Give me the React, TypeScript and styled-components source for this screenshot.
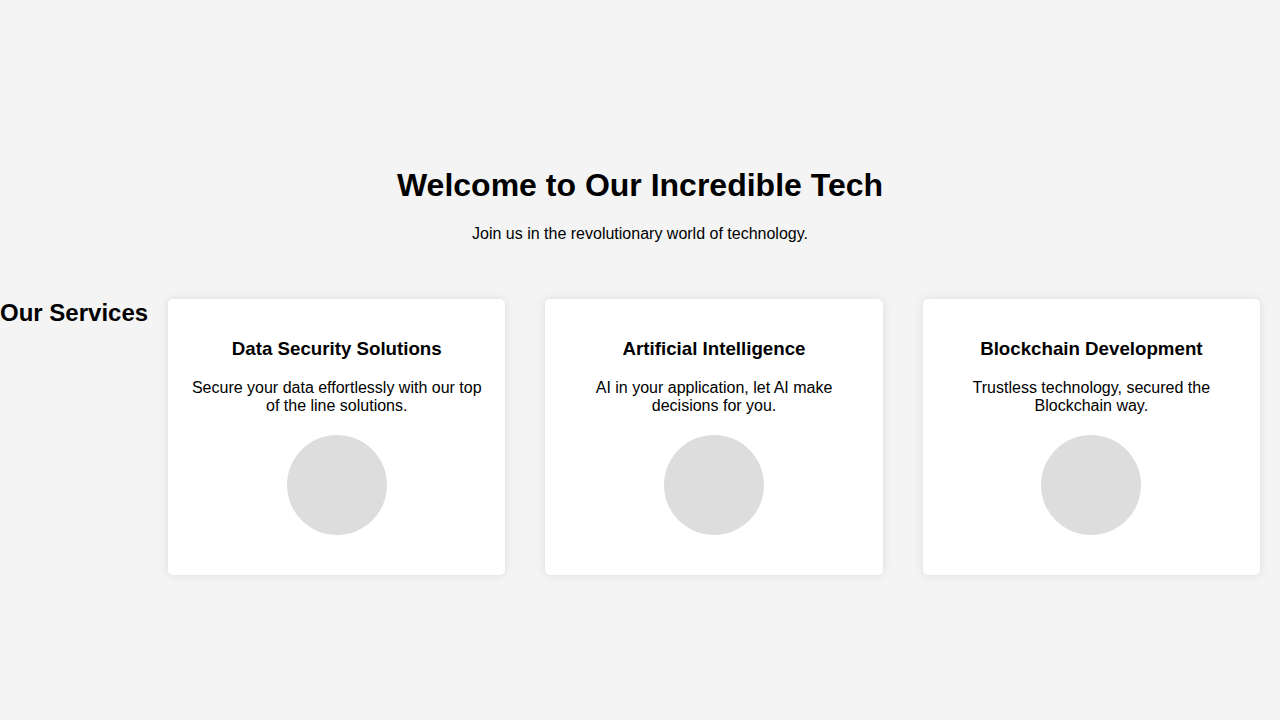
import React from "react";
import styled, { createGlobalStyle } from "styled-components";

const GlobalStyle = createGlobalStyle`
  html, body {
    margin: 0;
    padding: 0;
  }
  body {
    font-family: "Liberation Sans", Arial, sans-serif;
    background: #f4f4f4;
    color: #000;
  }
`;

const Page = styled.div`
  min-height: 100vh;
  display: flex;
  flex-direction: column;
  justify-content: center;
`;

const Header = styled.header`
  padding: 20px;
  text-align: center;
`;

const Title = styled.h1`
  font-size: 32px;
  margin: 21.44px 0;
`;

const Subtitle = styled.p`
  font-size: 16px;
  margin: 16px 0;
`;

const Services = styled.section`
  display: flex;
  align-items: flex-start;
`;

const SectionTitle = styled.h2`
  font-size: 24px;
  margin: 19.92px 0;
  white-space: nowrap;
`;

const Card = styled.div`
  flex: 1;
  margin: 20px;
  padding: 20px;
  background: #fff;
  border-radius: 5px;
  box-shadow: 0 0 10px rgba(0, 0, 0, 0.1);
  text-align: center;
`;

const CardTitle = styled.h3`
  font-size: 18.72px;
  margin: 18.72px 0;
`;

const CardText = styled.p`
  font-size: 16px;
  margin: 16px 0;
`;

const Avatar = styled.div`
  width: 100px;
  height: 100px;
  border-radius: 50%;
  background: #ddd;
  margin: 20px auto;
`;

const services = [
  {
    title: "Data Security Solutions",
    text: "Secure your data effortlessly with our top of the line solutions.",
  },
  {
    title: "Artificial Intelligence",
    text: "AI in your application, let AI make decisions for you.",
  },
  {
    title: "Blockchain Development",
    text: "Trustless technology, secured the Blockchain way.",
  },
];

export default function App() {
  return (
    <>
      <GlobalStyle />
      <Page>
        <Header>
          <Title>Welcome to Our Incredible Tech</Title>
          <Subtitle>Join us in the revolutionary world of technology.</Subtitle>
        </Header>
        <Services>
          <SectionTitle>Our Services</SectionTitle>
          {services.map((s) => (
            <Card key={s.title}>
              <CardTitle>{s.title}</CardTitle>
              <CardText>{s.text}</CardText>
              <Avatar />
            </Card>
          ))}
        </Services>
      </Page>
    </>
  );
}
